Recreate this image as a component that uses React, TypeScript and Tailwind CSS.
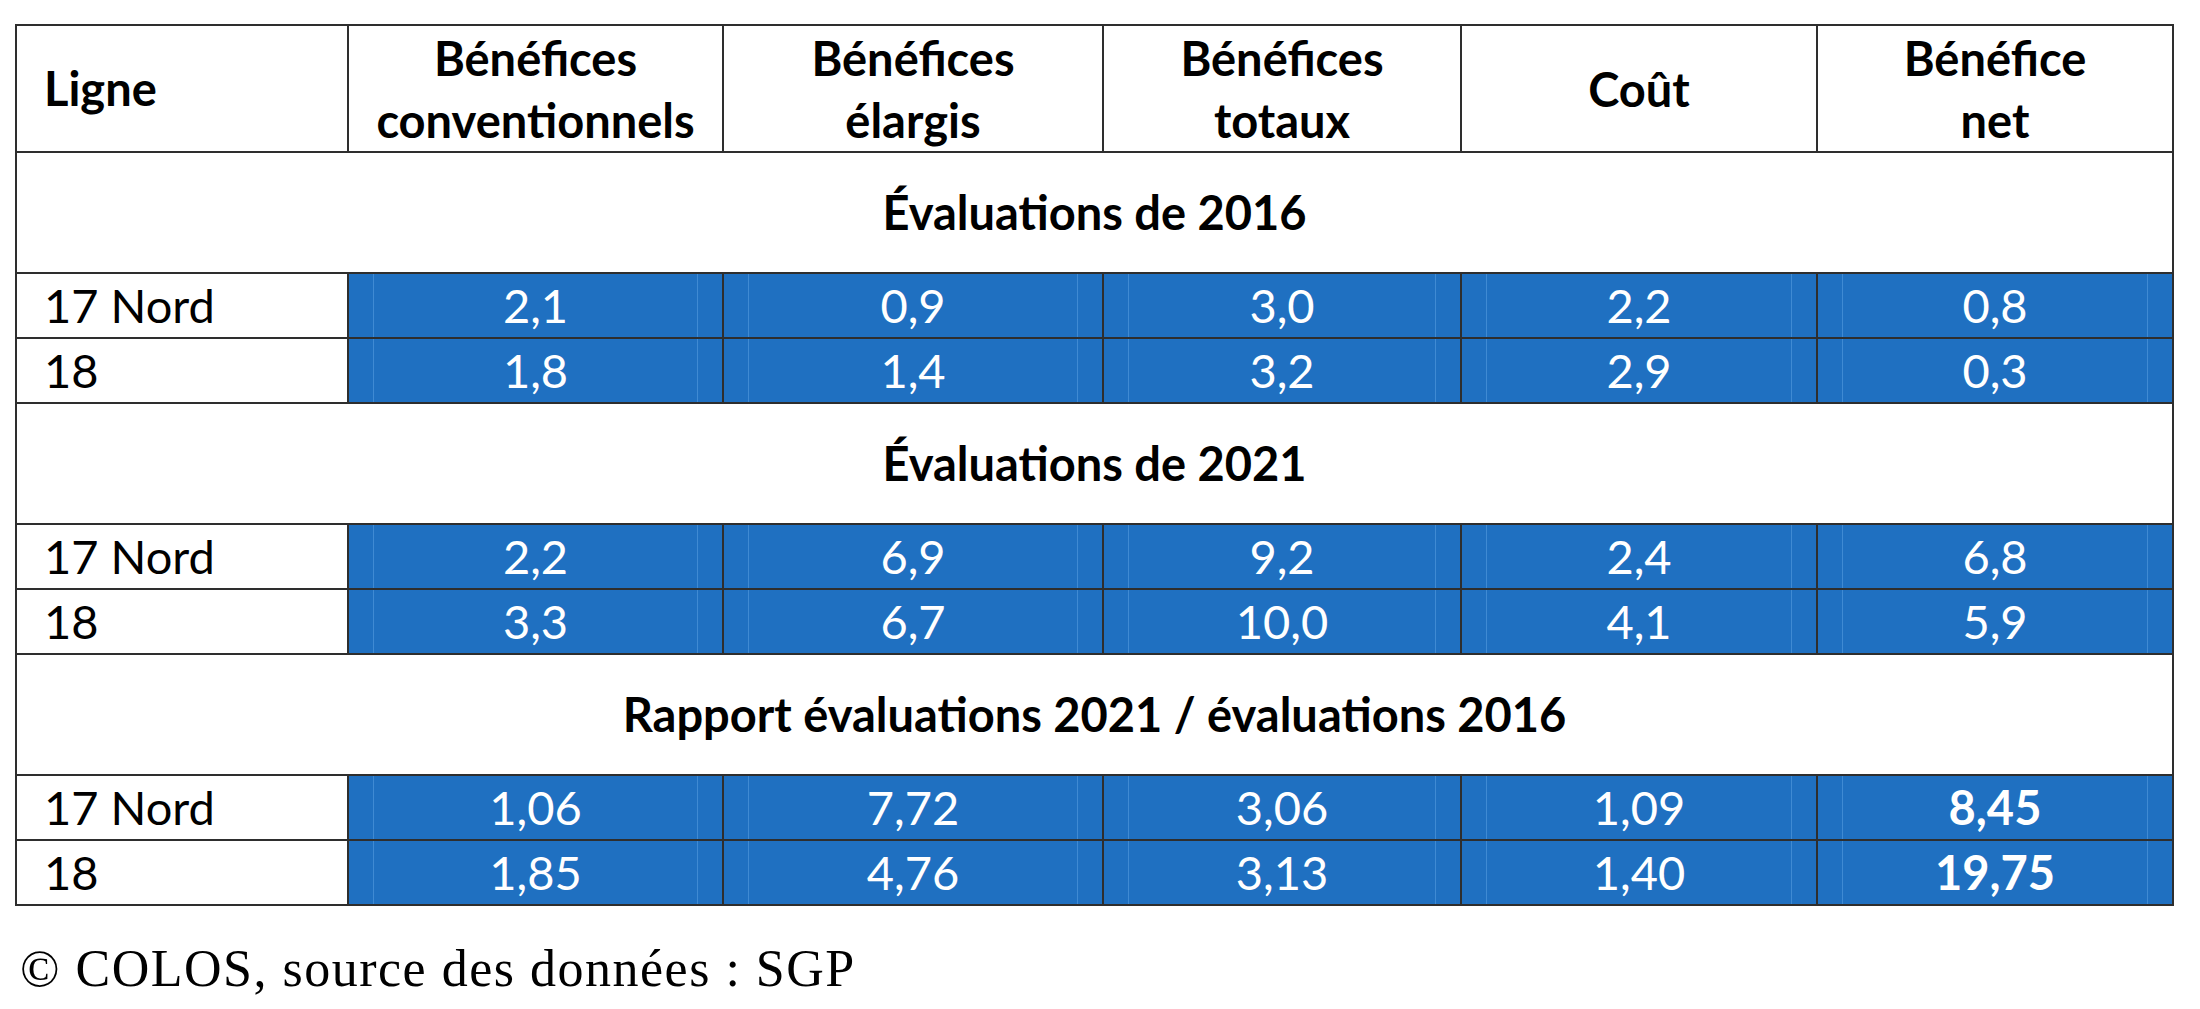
const widths = ["w-[375px]", "w-[380px]", "w-[358px]", "w-[356px]", "w-[356px]"];

const headers = [
  ["Bénéfices", "conventionnels"],
  ["Bénéfices", "élargis"],
  ["Bénéfices", "totaux"],
  ["Coût"],
  ["Bénéfice", "net"],
];

const sections = [
  {
    title: "Évaluations de 2016",
    rows: [
      { line: "17 Nord", values: ["2,1", "0,9", "3,0", "2,2", "0,8"] },
      { line: "18", values: ["1,8", "1,4", "3,2", "2,9", "0,3"] },
    ],
  },
  {
    title: "Évaluations de 2021",
    rows: [
      { line: "17 Nord", values: ["2,2", "6,9", "9,2", "2,4", "6,8"] },
      { line: "18", values: ["3,3", "6,7", "10,0", "4,1", "5,9"] },
    ],
  },
  {
    title: "Rapport évaluations 2021 / évaluations 2016",
    rows: [
      { line: "17 Nord", values: ["1,06", "7,72", "3,06", "1,09", "8,45"], boldLast: true },
      { line: "18", values: ["1,85", "4,76", "3,13", "1,40", "19,75"], boldLast: true },
    ],
  },
];

function DataRow({ line, values, boldLast }: { line: string; values: string[]; boldLast?: boolean }) {
  return (
    <div className="flex h-[65px] border-t-2 border-[#2e2e2e]">
      <div className="w-[330px] flex items-center pl-[27px] bg-white text-black">{line}</div>
      {values.map((v, i) => (
        <div key={i} className={`${widths[i]} flex border-l-2 border-[#2e2e2e] bg-[#1f70c1]`}>
          <div
            className={`flex flex-1 mx-[24px] items-center justify-center border-x border-[#3f8ad3] text-white ${
              boldLast && i === values.length - 1 ? "font-bold" : ""
            }`}
          >
            {v}
          </div>
        </div>
      ))}
    </div>
  );
}

export default function App() {
  return (
    <div className="min-h-screen w-full bg-white pt-[24px]">
      {/* Table */}
      <div className="ml-[15px] w-[2159px] border-2 border-[#2e2e2e] font-[Lato,sans-serif] text-[47px] leading-[63px] text-black">
        {/* Header row */}
        <div className="flex h-[125px] font-bold">
          <div className="w-[330px] flex items-center pl-[27px]">Ligne</div>
          {headers.map((h, i) => (
            <div
              key={i}
              className={`${widths[i]} flex flex-col items-center justify-center border-l-2 border-[#2e2e2e] text-center leading-[62px]`}
            >
              {h.map((t) => (
                <span key={t}>{t}</span>
              ))}
            </div>
          ))}
        </div>

        {sections.map((s) => (
          <div key={s.title}>
            <div className="flex h-[121px] items-center justify-center border-t-2 border-[#2e2e2e] font-bold">
              {s.title}
            </div>
            {s.rows.map((r, i) => (
              <DataRow key={i} line={r.line} values={r.values} boldLast={r.boldLast} />
            ))}
          </div>
        ))}
      </div>

      {/* Source */}
      <p className="ml-[20px] mt-[33px] font-['Liberation_Serif',serif] text-[52px] leading-[60px] tracking-[1.5px] text-black">
        © COLOS, source des données : SGP
      </p>
    </div>
  );
}
